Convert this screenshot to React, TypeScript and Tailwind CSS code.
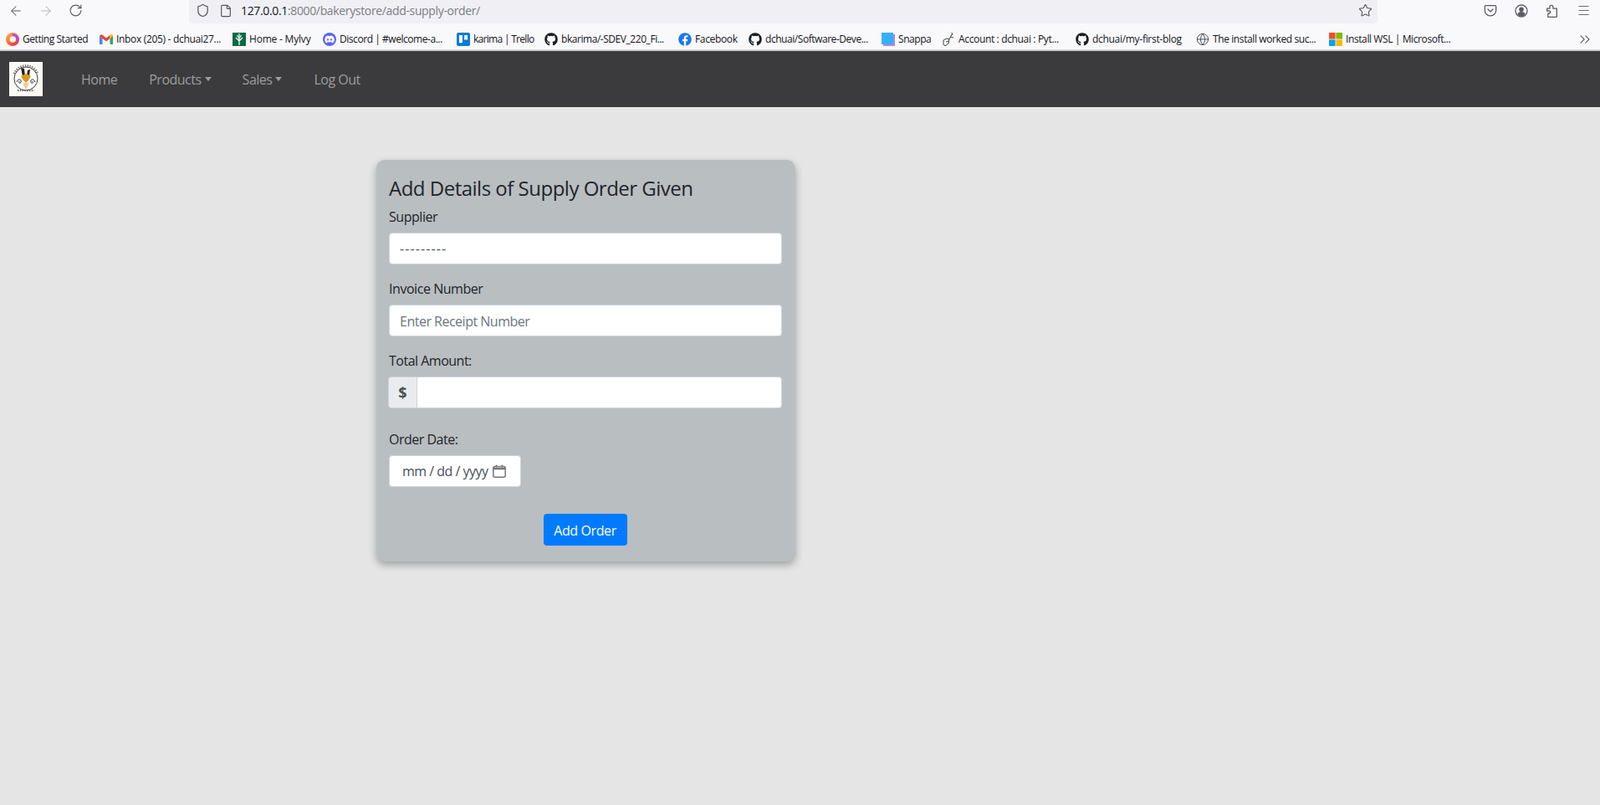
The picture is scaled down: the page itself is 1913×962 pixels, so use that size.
import React from "react";
import { ArrowLeft, ArrowRight, RotateCw, Shield, File, Star, Menu, ChevronsRight, Globe } from "lucide-react";
import { FaGithub, FaFacebook } from "react-icons/fa";
import { SiDiscord, SiTrello } from "react-icons/si";

const FirefoxIcon = () => (
  <svg width="16" height="16" viewBox="0 0 16 16">
    <defs>
      <linearGradient id="ff" x1="0" y1="0" x2="1" y2="1">
        <stop offset="0" stopColor="#ffbd4f" />
        <stop offset="0.6" stopColor="#ff5634" />
        <stop offset="1" stopColor="#e31587" />
      </linearGradient>
    </defs>
    <circle cx="8" cy="8" r="8" fill="url(#ff)" />
    <path d="M8 1a6.500 6.500 0 0 1 6.500 6.500c0 1-.2 1.800-.6 2.600L8 6z" fill="#9059ff" />
    <circle cx="8.300" cy="8" r="3.800" fill="#fff3e0" />
  </svg>
);

const GmailIcon = () => (
  <svg width="16" height="16" viewBox="0 0 16 16">
    <path d="M0 3.500V14h3.500V7z" fill="#4285f4" />
    <path d="M12.500 7v7H16V3.500z" fill="#34a853" />
    <path d="M0 3.500L3.500 7 8 10.500 12.500 7V2.800L8 6.500 2.500 2z" fill="#ea4335" />
    <path d="M12.500 7L16 3.500C16 2 14 1.400 12.500 2.800z" fill="#fbbc04" />
  </svg>
);

const MylvyIcon = () => (
  <svg width="16" height="16" viewBox="0 0 16 16">
    <rect width="16" height="16" fill="#0b6a46" />
    <path d="M8 6v9M8 10L4 6M8 10l4-4M8 7L5.500 3M8 7l2.500-4M8 5V1" stroke="#fff" strokeWidth="1.200" fill="none" />
  </svg>
);

const SnappaIcon = () => (
  <svg width="16" height="16" viewBox="0 0 16 16">
    <rect x="2" y="2" width="14" height="14" fill="#b583e0" />
    <rect x="0" y="0" width="14" height="14" fill="#35b0f5" />
  </svg>
);

const PypiIcon = () => (
  <svg width="16" height="16" viewBox="0 0 16 16" fill="none" stroke="#444" strokeWidth="1">
    <path d="M2 9l4-2 3 1-1 5-4 3-2-2z" />
    <path d="M5 11l3-1M9 8l3-6M10 5l4 1M12 0l1 3" />
  </svg>
);

const MicrosoftIcon = () => (
  <svg width="16" height="16" viewBox="0 0 16 16">
    <rect width="7.600" height="7.600" fill="#f25022" />
    <rect x="8.400" width="7.600" height="7.600" fill="#7fba00" />
    <rect y="8.400" width="7.600" height="7.600" fill="#00a4ef" />
    <rect x="8.400" y="8.400" width="7.600" height="7.600" fill="#ffb900" />
  </svg>
);

const PocketIcon = () => (
  <svg width="16" height="16" viewBox="0 0 16 16" fill="none" stroke="#5b5b66" strokeWidth="1.300" strokeLinejoin="round" strokeLinecap="round">
    <path d="M2.500 1.700h11a1.200 1.200 0 0 1 1.200 1.200v4.300a6.700 6.700 0 0 1-13.400 0V2.900a1.200 1.200 0 0 1 1.200-1.200z" />
    <path d="M5 6l3 3 3-3" />
  </svg>
);

const AccountIcon = () => (
  <svg width="16" height="16" viewBox="0 0 16 16">
    <circle cx="8" cy="8" r="7" fill="none" stroke="#5b5b66" strokeWidth="1.300" />
    <circle cx="8" cy="6.300" r="2.800" fill="#5b5b66" />
    <path d="M3.500 12.500a4.500 3.500 0 0 1 9 0 6 6 0 0 1-9 0z" fill="#5b5b66" />
  </svg>
);

const ExtensionIcon = () => (
  <svg width="16" height="16" viewBox="0 0 16 16" fill="none" stroke="#5b5b66" strokeWidth="1.300" strokeLinejoin="round">
    <path d="M1.700 5.200h3.200V3.400a2 2 0 0 1 4 0v1.800h4.400v9.500a.6.600 0 0 1-.6.600H2.800v-4.300h1.500a1.500 1.500 0 0 0 0-3H1.700z" />
  </svg>
);

const LogoIcon = () => (
  <svg width="40" height="41" viewBox="0 0 40 41" className="shrink-0">
    <rect width="40" height="41" fill="#fbfaf7" />
    <path d="M6 17a15 15 0 0 1 28 0M10 37h20" fill="none" stroke="#666" strokeWidth="2.500" strokeDasharray="1.300 1.500" transform="translate(0 -3)" />
    <circle cx="20" cy="20" r="14" fill="#fff" stroke="#222" strokeWidth="0.900" />
    <path d="M14 7l4 1 1 9-3 0zM25 9l-3 1-1 7 3 0z" fill="#2a1c14" />
    <path d="M14 17l6-3 6 3-3 5-3 3-3-3z" fill="#d99a1c" />
    <path d="M16 25h8l-4 9z" fill="#edcf9a" />
    <path d="M9 24c2-5 6-3 5 0s-3 1-2-1M31 24c-2-5-6-3-5 0s3 1 2-1" fill="none" stroke="#222" strokeWidth="1" />
  </svg>
);

const bookmarks = [
  { icon: <FirefoxIcon />, label: "Getting Started", text: "w-[80px] tracking-[-0.45px]" },
  { icon: <GmailIcon />, label: "Inbox (205) - dchuai27...", text: "w-[127px] tracking-[-0.32px]" },
  { icon: <MylvyIcon />, label: "Home - Mylvy", text: "w-[76px] tracking-[-0.2px]" },
  { icon: <SiDiscord className="rounded-full bg-[#5865f2] p-[2px] text-white" size={16} />, label: "Discord | #welcome-a...", text: "w-[128px] tracking-[-0.45px]" },
  { icon: <SiTrello className="text-[#0c7bd6]" size={16} />, label: "karima | Trello", text: "w-[73px] tracking-[-0.7px]" },
  { icon: <FaGithub className="text-[#1b1f23]" size={16} />, label: "bkarima/-SDEV_220_Fi...", text: "w-[128px] tracking-[-0.45px]" },
  { icon: <FaFacebook className="text-[#1877f2]" size={16} />, label: "Facebook", text: "w-[52px] tracking-[-0.35px]" },
  { icon: <FaGithub className="text-[#1b1f23]" size={16} />, label: "dchuai/Software-Deve...", text: "w-[127px] tracking-[-0.45px]" },
  { icon: <SnappaIcon />, label: "Snappa", text: "w-[40px] tracking-[-0.45px]" },
  { icon: <PypiIcon />, label: "Account : dchuai : Pyt...", text: "w-[128px] tracking-[-0.35px]" },
  { icon: <FaGithub className="text-[#1b1f23]" size={16} />, label: "dchuai/my-first-blog", text: "w-[112px] tracking-[-0.3px]" },
  { icon: <Globe className="text-[#4f4f58]" size={16} strokeWidth={1.500} />, label: "The install worked suc...", text: "w-[127px] tracking-[-0.4px]" },
  { icon: <MicrosoftIcon />, label: "Install WSL | Microsoft...", text: "w-[127px] tracking-[-0.4px]" },
];

const Caret = () => <span className="ml-[4px] inline-block border-x-[4px] border-t-[5px] border-x-transparent border-t-current align-[3px]" />;

export default function App() {
  return (
    <div className="min-h-[962px] bg-[#e5e5e5] font-['Open_Sans',sans-serif] text-[#212529]">
      {/* browser chrome */}
      <div className="h-[28px] bg-[#f9f9fb] flex items-start">
        <div className="flex w-[226px] shrink-0 items-center h-[25px] pl-[10px] text-[#5b5b66]">
          <ArrowLeft size={18} strokeWidth={1.400} />
          <ArrowRight size={18} strokeWidth={1.400} className="ml-[18px] text-[#b4b4ba]" />
          <RotateCw size={17} strokeWidth={1.600} className="ml-[18px]" />
        </div>
        <div className="flex h-[28px] w-[1421px] items-center rounded-br-[4px] rounded-bl-[4px] bg-[#f0f0f4] pl-[8px] pr-[6px] pb-[3px] text-[#52525b]">
          <Shield size={17} strokeWidth={1.700} />
          <File size={16} strokeWidth={1.700} className="ml-[11px]" />
          <span className="ml-[10px] text-[14px] tracking-[-0.35px] text-[#15141a]">
            127.0.0.1<span className="text-[#7c7c84]">:8000/bakerystore/add-supply-order/</span>
          </span>
          <Star size={17} strokeWidth={1.500} className="ml-auto" />
        </div>
        <div className="flex flex-1 items-center h-[25px] pl-[127px] gap-[21px]">
          <PocketIcon />
          <AccountIcon />
          <ExtensionIcon />
          <Menu size={17} strokeWidth={1.300} className="text-[#5b5b66]" />
        </div>
      </div>
      <div className="flex h-[33px] items-center gap-[12px] border-b-[2px] border-[#d0d0d0] bg-[#f9f9fb] pl-[7px] pt-[6px] text-[12px] text-[#15141a]">
        {bookmarks.map((b, i) => (
          <div key={i} className="flex items-center gap-[4px] shrink-0">
            <span className="flex h-[16px] w-[16px] items-center justify-center">{b.icon}</span>
            <span className={`${b.text} whitespace-nowrap`}>{b.label}</span>
          </div>
        ))}
        <ChevronsRight size={20} strokeWidth={1.300} className="ml-auto mr-[8px] text-[#5b5b66]" />
      </div>

      {/* navbar */}
      <nav className="flex h-[67px] items-center bg-[#3b3b3d] pl-[11px] text-[16px] tracking-[-0.5px] text-[#9d9d9d]">
        <LogoIcon />
        <a className="ml-[46px]">Home</a>
        <a className="ml-[38px] flex items-center">Products<Caret /></a>
        <a className="ml-[37px] flex items-center">Sales<Caret /></a>
        <a className="ml-[38px]">Log Out</a>
      </nav>

      {/* form card */}
      <div className="ml-[450px] mt-[63px] h-[480px] w-[501px] rounded-[10px] bg-[#b9bec1] px-[15px] pt-[19px] shadow-[0_4px_10px_rgba(0,0,0,0.3)]">
        <h2 className="text-[24px] leading-[29px] tracking-[-0.5px]">Add Details of Supply Order Given</h2>
        <label className="mt-[8px] block text-[16px] leading-[24px] tracking-[-0.45px]">Supplier</label>
        <div className="mt-[7px] flex h-[38px] w-[470px] items-center rounded-[4px] border border-[#ced4da] bg-white px-[12px] text-[16px] tracking-[1.1px] text-[#495057]">---------</div>
        <label className="mt-[17px] block text-[16px] leading-[24px] tracking-[-0.45px]">Invoice Number</label>
        <input
          className="mt-[7px] block h-[38px] w-[470px] rounded-[4px] border border-[#ced4da] bg-white px-[12px] pt-[2px] text-[16px] tracking-[-0.5px] text-[#495057] placeholder:text-[#6c757d]"
          placeholder="Enter Receipt Number"
        />
        <label className="mt-[17px] block text-[16px] leading-[24px] tracking-[-0.5px]">Total Amount:</label>
        <div className="mt-[7px] -ml-px flex h-[38px] w-[471px]">
          <span className="flex w-[35px] items-center justify-center rounded-l-[4px] border border-[#ced4da] bg-[#e9ecef] text-[18px] font-bold text-[#495057]">$</span>
          <input className="-ml-px flex-1 rounded-r-[4px] border border-[#ced4da] bg-white" />
        </div>
        <label className="mt-[25px] block text-[16px] leading-[24px] tracking-[-0.5px]">Order Date:</label>
        <div className="mt-[7px] flex h-[38px] w-[158px] items-center rounded-[4px] border border-[#ced4da] bg-white pl-[15px] text-[16px] tracking-[-0.5px] text-[#495057]">
          mm / dd / yyyy
          <svg width="16" height="16" viewBox="0 0 16 16" className="ml-[5px]" fill="none" stroke="#757575" strokeWidth="1.500">
            <rect x="0.800" y="2.500" width="14.400" height="12.700" rx="2" />
            <path d="M0.800 5h14.400" strokeWidth="2.500" />
            <path d="M4.500 0.500v3M11.500 0.500v3" />
          </svg>
        </div>
        <div className="mt-[32px] w-[469px] flex justify-center">
          <button className="h-[38px] w-[100px] rounded-[4px] bg-[#007bff] pt-[2px] text-[16px] tracking-[-0.4px] text-white">Add Order</button>
        </div>
      </div>
    </div>
  );
}
